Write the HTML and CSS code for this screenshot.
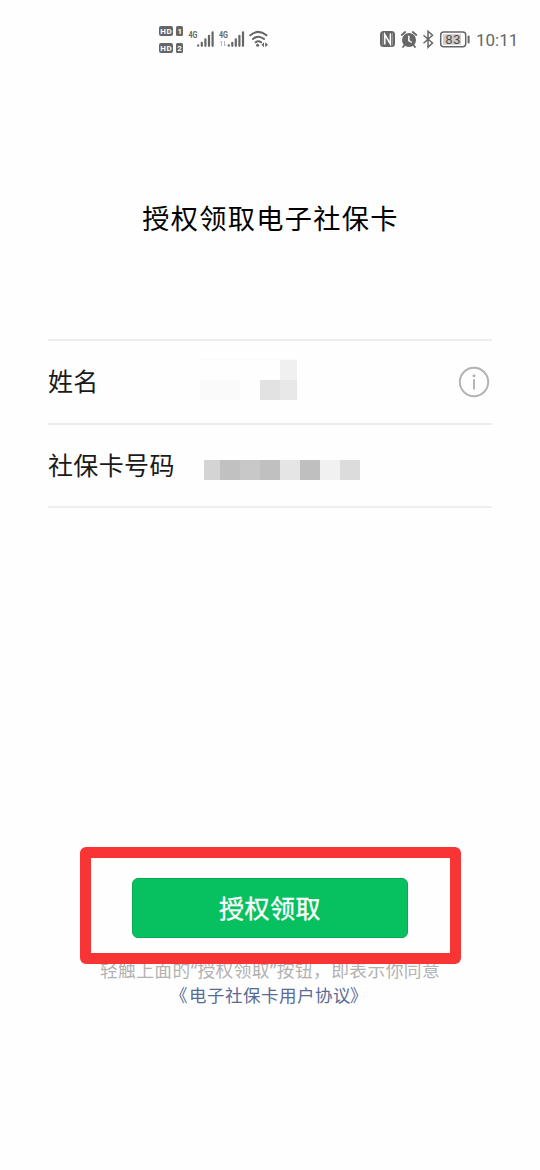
FILE: index.html
```html
<!DOCTYPE html>
<html lang="zh-CN">
<head>
<meta charset="utf-8">
<title>授权领取电子社保卡</title>
<link rel="stylesheet" href="styles.css">
</head>
<body>
<header class="status">
  <svg class="status-left" width="112" height="34" viewBox="158 22 112 34">
    <g fill="#666">
      <rect x="159" y="26" width="14" height="10" rx="2"/><rect x="176" y="26" width="7" height="10" rx="1.5"/>
      <rect x="159" y="43" width="14" height="10" rx="2"/><rect x="176" y="43" width="7" height="10" rx="1.5"/>
    </g>
    <g class="sim" fill="#fff"><text x="160.3" y="34" textLength="11.4">HD</text><text x="177.5" y="34">1</text><text x="160.3" y="51" textLength="11.4">HD</text><text x="177.3" y="51">2</text></g>
    <g class="network" fill="#666"><text x="188.5" y="38" textLength="9" lengthAdjust="spacingAndGlyphs">4G</text><text x="219" y="38" textLength="9" lengthAdjust="spacingAndGlyphs">4G</text></g>
    <g stroke="#666" stroke-width="2.2" stroke-linecap="round">
      <path d="M198.2 45.4v.3M201.8 42.8v3M205.4 39.3v6.5M209 35.8v10M212.6 32.3v13.5"/>
      <path d="M228.8 45.4v.3M232.3 42.8v3M235.8 39.3v6.5M239.4 35.8v10M243 32.3v13.5"/>
    </g>
    <path d="M221.5 46v-5l-1.5 1.5M224.5 41v5l1.5-1.5" fill="none" stroke="#bbb"/>
    <g fill="none" stroke="#666" stroke-width="2" stroke-linecap="round"><path d="M250.300 35.300q8-6.800 16.200 0M253 39q5.400-4.500 11 0M255.700 42.300q2.700-2 5.400 0"/></g>
    <circle cx="257.600" cy="45.300" r="1.500" fill="#666"/><path d="M264 42.200v5l-2.500-2.500zM265.200 42.200v5l2.800-2.500z" fill="#666"/>
  </svg>
  <div class="status-right">
    <svg width="92" height="20" viewBox="379 30 92 20">
      <rect x="380" y="31" width="15" height="16" rx="3.500" fill="#666"/>
      <path d="M384.800 44.500V34.500l5.600 9.500V33.500" fill="none" stroke="#fff" stroke-width="1.500"/>
      <path d="M382.800 33v12M392.500 33v12" stroke="#aaa" stroke-width=".7"/>
      <circle cx="409" cy="40" r="7" fill="#666"/><path d="M401.700 35l3.500-3M416.300 35l-3.500-3M404.500 45l-1.500 2M413.500 45l1.500 2" stroke="#666" stroke-width="1.800" stroke-linecap="round"/><path d="M408.800 35.800V40.500l3 2" fill="none" stroke="#fff" stroke-width="1.500"/>
      <path d="M423.500 35.300l9 7.700-4.500 4.200V31.300l4.500 4-9 8" fill="none" stroke="#666" stroke-width="1.500"/>
      <rect x="440.700" y="32" width="25" height="14.800" rx="3" fill="#fff" stroke="#666" stroke-width="1.500"/><rect x="443" y="34.200" width="18" height="10.400" fill="#ccc"/><path d="M468.600 36.500v6" stroke="#666" stroke-width="2" stroke-linecap="round"/>
      <text class="battery" x="445.600" y="43.800" textLength="14.500" fill="#444">83</text>
    </svg>
    <span class="clock">10:11</span>
  </div>
</header>
<main class="page">
  <h1 class="title">授权领取电子社保卡</h1>
  <section class="fields">
    <div class="row">
      <span class="label">姓名</span>
      <svg class="name-mask" width="100" height="41" shape-rendering="crispEdges"><path fill="#fafafa" d="M0 0h100v1H0zM3 21h40v20H3z"/><path fill="#f0f0f0" d="M83 1h17v20H83z"/><path fill="#e2e2e2" d="M63 21h20v20H63z"/><path fill="#e8e8e8" d="M83 21h17v20H83z"/></svg>
      <svg class="info" width="32" height="32" viewBox="0 0 32 32"><circle cx="16" cy="16" r="14.200" fill="none" stroke="#b2b2b2" stroke-width="1.900"/><circle cx="16" cy="9.800" r="1.500" fill="#b2b2b2"/><path d="M16 13.200v10.300" stroke="#b2b2b2" stroke-width="1.900"/></svg>
    </div>
    <div class="row number-row">
      <span class="label">社保卡号码</span>
      <div class="number-mask"><i class="m1"></i><i class="m2"></i><i class="m3"></i><i class="m4"></i><i class="m5"></i><i class="m6"></i><i class="m7"></i><i class="m8"></i></div>
    </div>
  </section>
  <section class="action">
    <button class="submit">授权领取</button>
    <p class="notice">轻触上面的<span class="quote">“</span>授权领取<span class="quote">”</span>按钮，即表示你同意</p>
    <a class="agreement"><span class="bracket left">《</span>电子社保卡用户协议<span class="bracket right">》</span></a>
    <div class="highlight"></div>
  </section>
</main>
</body>
</html>
```
FILE: styles.css
```css
* { box-sizing: border-box; }
body { margin: 0; width: 540px; height: 1170px; background: #fefefe; font-family: "Noto Sans CJK SC", sans-serif; color: #1a1a1a; overflow: hidden; }
.status { display: flex; justify-content: space-between; height: 78px; padding: 22px 22px 0 158px; }
.status-left { display: block; }
.status-right { display: flex; gap: 5px; height: 36px; padding-top: 8px; }
.sim { font: bold 8px Roboto, sans-serif; }
.network { font: bold 9px Roboto, sans-serif; }
.battery { font: 400 12.5px "Liberation Sans", sans-serif; }
.clock { font: 17px/20px Roboto, sans-serif; color: #666; width: 42px; white-space: nowrap; }
.page { display: flex; flex-direction: column; }
.title { margin: 119px 0 0; text-align: center; font-size: 27.2px; line-height: 40px; font-weight: 400; letter-spacing: 1.3px; padding-left: 1px; color: #000; }
.fields { margin: 102px 48px 0; border-top: 2px solid #eee; }
.row { display: flex; align-items: center; height: 84px; border-bottom: 2px solid #eee; }
.number-row { height: 83px; }
.label { width: 127px; font-size: 25px; line-height: 36px; letter-spacing: .35px; white-space: nowrap; padding-bottom: 4px; }
.name-mask { display: block; margin-left: 22px; margin-top: -5px; }
.info { display: block; margin-left: auto; margin-right: 2px; }
.number-mask { display: flex; height: 20px; margin-left: 29px; margin-top: 9px; }
.number-mask i { width: 20px; }
.number-mask .m1 { width: 16px; background: #d4d4d4; }
.m2 { background: #c1c1c1; }
.m3 { background: #c8c8c8; }
.m4 { background: #c0c0c0; }
.m5 { background: #e5e5e5; }
.m6 { background: #bfbfbf; }
.m7 { background: #f1f1f1; }
.m8 { background: #dcdcdc; }
.action { position: relative; margin: 339px 80px 0 80px; padding-top: 31px; height: 170px; display: flex; flex-direction: column; align-items: center; }
.submit { width: 276px; height: 60px; padding: 0 0 2px; border: 1px solid #08a951; border-radius: 6px; background: #07c160; color: #fff; font: 400 25px/36px "Noto Sans CJK SC", sans-serif; -webkit-text-stroke: .35px #fff; letter-spacing: .5px; }
.notice { margin: 18px 0 0; color: #b2b2b2; font-size: 17.7px; line-height: 26px; letter-spacing: .45px; white-space: nowrap; }
.quote { font-family: "Noto Sans", sans-serif; }
.agreement { color: #576b95; font-size: 17.5px; line-height: 24px; letter-spacing: .5px; white-space: nowrap; }
.bracket { display: inline-block; width: 10px; }
.bracket.left { text-indent: -9px; }
.bracket.right { text-indent: -1px; }
.highlight { position: absolute; left: 0; top: 0; width: 381px; height: 117px; border: 11px solid #f83434; border-radius: 6px; }
```
